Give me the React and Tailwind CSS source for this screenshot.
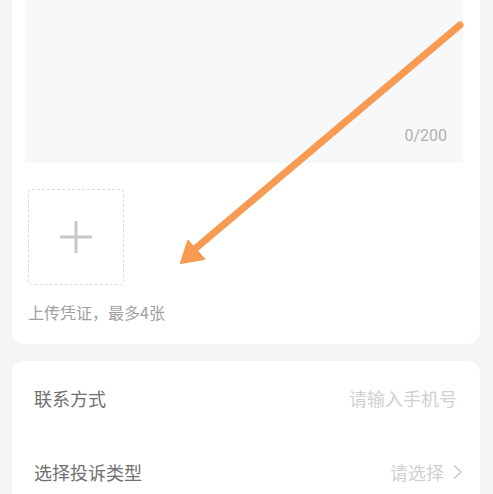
import React from "react";

export default function App() {
  return (
    <div
      className="relative w-[493px] h-[494px] overflow-hidden bg-[#f4f5f7]"
      style={{ fontFamily: '"Noto Sans CJK SC", "Noto Sans", Roboto, sans-serif' }}
    >
      <div className="ml-3 w-[468px] bg-white rounded-b-xl">
        <div className="ml-[13px] w-[438px] h-[163px] bg-[#f7f8fa] flex items-end justify-end pr-4 pb-[16px]">
          <span className="text-[16px] leading-[22px] text-[#b0b0b0]" style={{ fontFamily: 'Roboto, "Noto Sans", sans-serif' }}>0/200</span>
        </div>
        <div className="pl-4 pt-[26px] pb-[21px]">
          <div className="w-[96px] h-[96px] border border-dashed border-[#dcdcdc] rounded-[4px] flex items-center justify-center">
            <svg width="34" height="34" viewBox="0 0 34 34">
              <path d="M17 1 V33 M1 17 H33" stroke="#c8c8c8" strokeWidth="3" fill="none" />
            </svg>
          </div>
          <div className="mt-[16px] text-[16px] leading-[22px] text-[#a0a0a0]">上传凭证，最多4张</div>
        </div>
      </div>
      <div className="ml-3 mt-[17px] w-[468px] bg-white rounded-xl">
        <div className="h-[74px] flex items-center justify-between pl-[22px] pr-[23px]">
          <span className="text-[18px] text-[#707070]">联系方式</span>
          <span className="text-[18px] text-[#d0d0d0]">请输入手机号</span>
        </div>
        <div className="h-[74px] flex items-center justify-between pl-[22px] pr-[17px]">
          <span className="text-[18px] text-[#707070]">选择投诉类型</span>
          <span className="flex items-center gap-[8px]">
            <span className="text-[18px] text-[#d0d0d0]">请选择</span>
            <svg width="11" height="16" viewBox="0 0 11 16">
              <path d="M2 1.5 L9 8 L2 14.5" stroke="#cccccc" strokeWidth="1.6" fill="none" />
            </svg>
          </span>
        </div>
      </div>
      <svg className="absolute left-0 top-0 pointer-events-none" width="493" height="494" viewBox="0 0 493 494">
        <line x1="460" y1="25" x2="196" y2="248" stroke="#f79a52" strokeWidth="7" strokeLinecap="round" />
        <polygon points="181,263 188,241 204,259" fill="#f79a52" stroke="#f79a52" strokeWidth="2" strokeLinejoin="round" />
      </svg>
    </div>
  );
}
